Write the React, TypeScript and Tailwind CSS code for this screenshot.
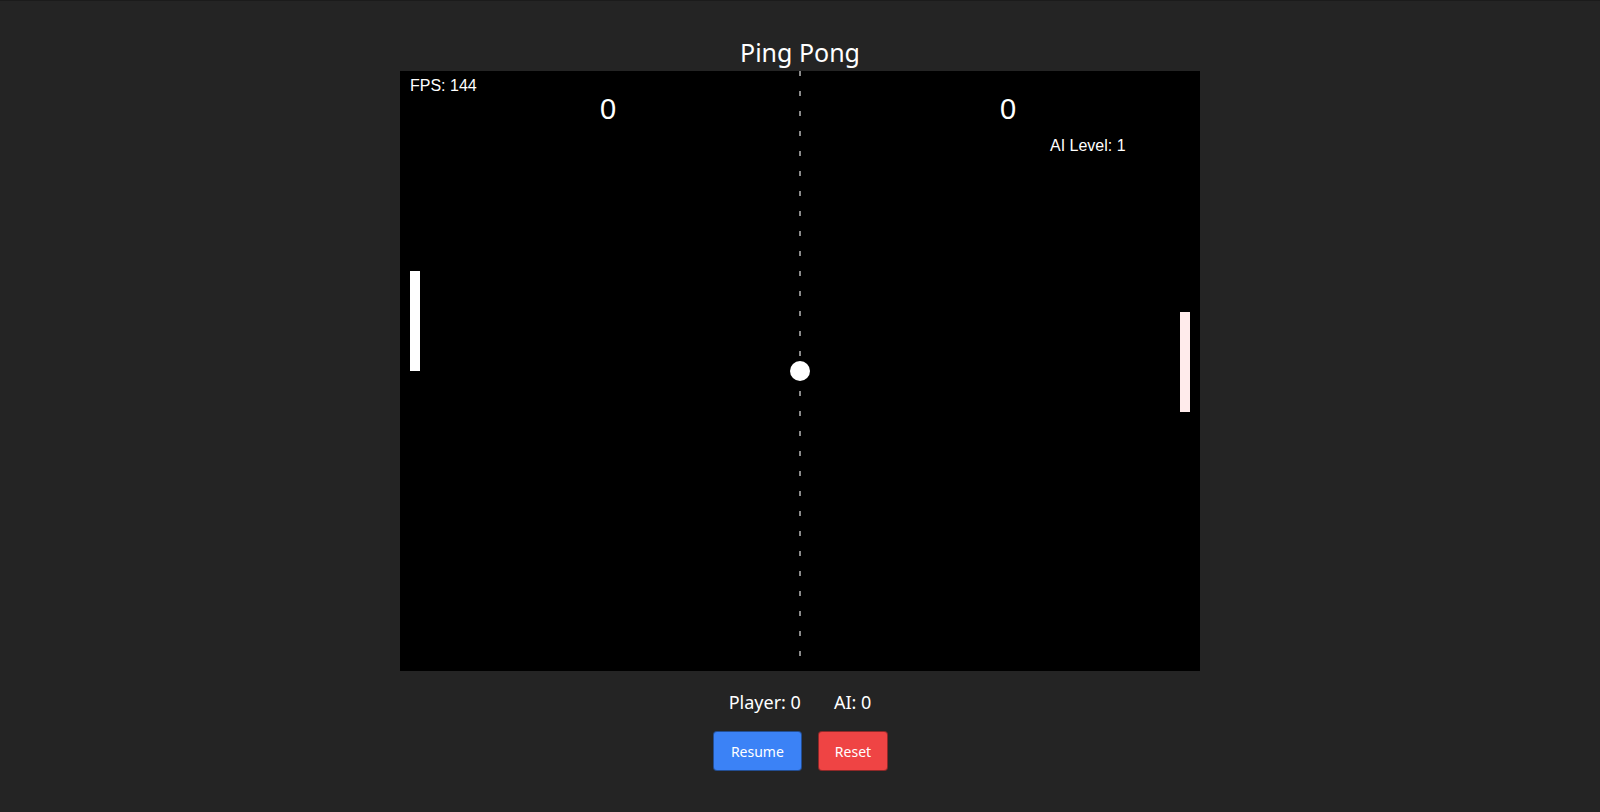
import { useMemo } from "react";

const FIELD_W = 800;
const FIELD_H = 600;

type Paddle = { x: number; y: number; color: string };

const paddles: Paddle[] = [
  { x: 10, y: 200, color: "#ffffff" },
  { x: 780, y: 241, color: "#ffebeb" },
];

function GameField() {
  // centre line: 5px dash every 20px
  const dashes = useMemo(() => {
    const out: number[] = [];
    for (let y = 0; y < FIELD_H; y += 20) out.push(y);
    return out;
  }, []);

  return (
    <svg
      width={FIELD_W}
      height={FIELD_H}
      viewBox={`0 0 ${FIELD_W} ${FIELD_H}`}
      className="block bg-black"
    >
      {dashes.map((y) => (
        <rect key={y} x={399} y={y} width={2} height={5} fill="#8a8a8a" />
      ))}
      {paddles.map((p, i) => (
        <rect key={i} x={p.x} y={p.y} width={10} height={100} fill={p.color} />
      ))}
      <circle cx={400} cy={300} r={10} fill="#ffffff" />
      <g fontFamily="'Liberation Sans', Arial, sans-serif" fill="#ffffff">
        <text x={10} y={20} fontSize={16}>
          FPS: 144
        </text>
        <text x={200} y={48} fontSize={29}>
          0
        </text>
        <text x={600} y={48} fontSize={29}>
          0
        </text>
        <text x={650} y={80} fontSize={16}>
          AI Level: 1
        </text>
      </g>
    </svg>
  );
}

export default function App() {
  return (
    <div
      className="min-h-screen w-full bg-[#242424] border-t border-[#1b1b1b] flex flex-col items-center pt-[35px] text-white"
      style={{ fontFamily: "'Noto Sans', 'Open Sans', sans-serif" }}
    >
      <h1 className="text-[25px] leading-[32px] h-[32px] font-normal">Ping Pong</h1>
      <div className="mt-[3px]">
        <GameField />
      </div>
      <div className="mt-[17px] flex gap-[33px] text-[18px] leading-[28px]">
        <span>Player: 0</span>
        <span>AI: 0</span>
      </div>
      <div className="mt-[15px] ml-[1px] flex gap-4">
        <button className="h-10 px-[17px] rounded border border-black/40 bg-[#3b82f6] text-[14px] text-white">
          Resume
        </button>
        <button className="h-10 px-4 rounded border border-black/40 bg-[#ef4444] text-[14px] text-white">
          Reset
        </button>
      </div>
    </div>
  );
}
